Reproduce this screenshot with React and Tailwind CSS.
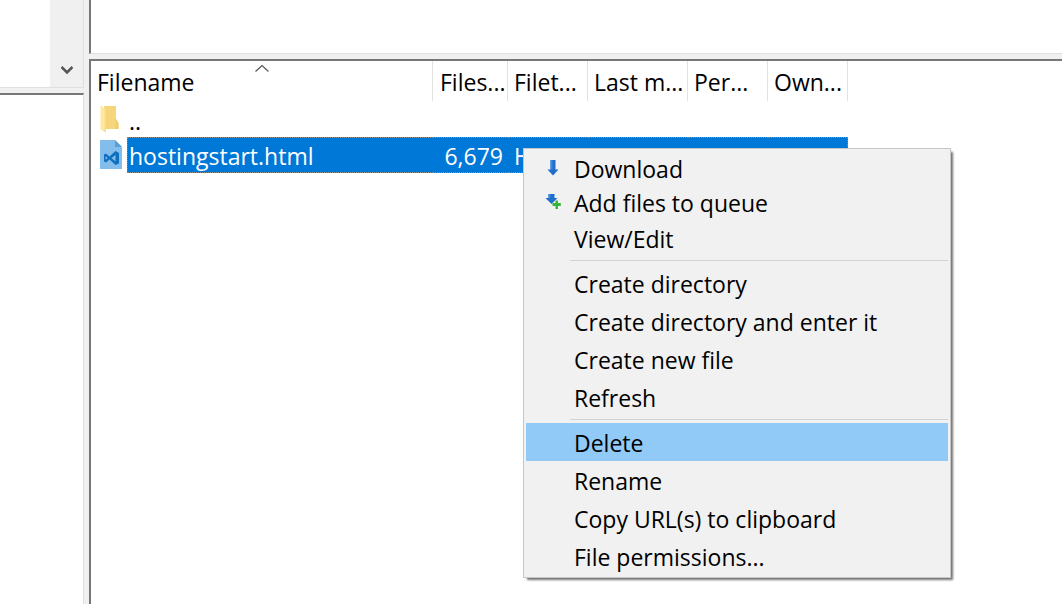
import React from 'react';

function FolderIcon() {
  return (
    <svg width="20" height="28" viewBox="0 0 20 28" aria-hidden="true">
      <path d="M4 1H16V14L18.500 18V24H4Z" fill="#f5d67c" />
      <path d="M16 14L18.500 18V24H15Z" fill="#f0cd70" />
      <path d="M0.500 1H2L6 5V27.500L0.500 24.500Z" fill="#ffe7a0" />
      <path d="M4.500 3.500L6 5V27.500L4.500 26.500Z" fill="#fbdc8a" />
    </svg>
  );
}

function HtmlFileIcon() {
  return (
    <svg width="22" height="30" viewBox="0 0 22 30" aria-hidden="true">
      <path d="M0 0H15L22 7V29H0Z" fill="#83bdec" />
      <path d="M15 0L22 7H15Z" fill="#5a9fd8" />
      <path d="M15.500 11L19 13V23.500L15.500 25L9.500 19.500L6 22.500L4 21.500V14.500L6 13.500L9.500 16.500ZM15.500 15L11.500 18L15.500 21.500ZM5.600 16.200V19.800L7.600 18Z" fill="#0f70bf" fillRule="evenodd" />
    </svg>
  );
}

function DownloadIcon() {
  return (
    <svg width="16" height="20" viewBox="0 0 16 20" aria-hidden="true">
      <path d="M5.500 2H10.500V11.500H13.500L8 17.500L2.500 11.500H5.500Z" fill="#1f6fca" />
      <path d="M5.500 2H7.500V11.500H5.500Z" fill="#3d8ade" />
    </svg>
  );
}

function QueueIcon() {
  return (
    <svg width="16" height="20" viewBox="0 0 16 20" aria-hidden="true">
      <path d="M3.500 2H9.500V6H12.500L6.500 12L0.500 6H3.500Z" fill="#1f6fca" />
      <path d="M3.500 2H5.500V6H3.500Z" fill="#3d8ade" />
      <path d="M10.500 8.500H13V11H15.800V14H13V17H10.500V14H7.500V11H10.500Z" fill="#35b637" />
    </svg>
  );
}

const columns = [
  { label: 'Filename', width: 'w-[342px]', pad: 'pl-[6px]', sorted: true },
  { label: 'Files...', width: 'w-[75px]', pad: 'pl-[7px]' },
  { label: 'Filet...', width: 'w-[80px]', pad: 'pl-[6px]' },
  { label: 'Last m...', width: 'w-[100px]', pad: 'pl-[6px]' },
  { label: 'Per...', width: 'w-[80px]', pad: 'pl-[6px]' },
  { label: 'Own...', width: 'w-[80px]', pad: 'pl-[6px]' },
];

const groups = [
  [
    { label: 'Download', icon: <DownloadIcon />, height: 'h-[34px]' },
    { label: 'Add files to queue', icon: <QueueIcon />, height: 'h-[34px]' },
    { label: 'View/Edit' },
  ],
  [
    { label: 'Create directory' },
    { label: 'Create directory and enter it' },
    { label: 'Create new file' },
    { label: 'Refresh' },
  ],
  [
    { label: 'Delete', active: true },
    { label: 'Rename' },
    { label: 'Copy URL(s) to clipboard' },
    { label: 'File permissions...' },
  ],
];

const selected = 'border-y border-dotted border-[#8f8a80] bg-[#0078d7] p-0 text-white';

function FileTable() {
  return (
    <table className="w-[757px] table-fixed border-separate border-spacing-0 text-left">
      <thead>
        <tr className="h-10">
          {columns.map((c) => (
            <th
              key={c.label}
              scope="col"
              aria-sort={c.sorted ? 'ascending' : undefined}
              className={`relative border-r border-[#e2e2e2] p-0 pt-[2px] font-normal whitespace-nowrap ${c.width} ${c.pad}`}
            >
              {c.label}
              {c.sorted && (
                <svg className="absolute top-[3px] left-1/2 -ml-2" width="16" height="9" viewBox="0 0 16 9" aria-hidden="true">
                  <path d="M1.500 7.500L8 1.500L14.500 7.500" fill="none" stroke="#555" strokeWidth="1.200" />
                </svg>
              )}
            </th>
          ))}
        </tr>
      </thead>
      <tbody>
        <tr className="h-9">
          <td className="p-0" colSpan={6}>
            <div className="flex h-9 items-center pl-[9px]">
              <FolderIcon />
              <span className="pt-1 pl-[9px]">..</span>
            </div>
          </td>
        </tr>
        <tr className="h-9">
          <td className="p-0">
            <div className="flex h-9 pl-[9px]">
              <span className="mr-[5px] flex items-center"><HtmlFileIcon /></span>
              <span className="flex flex-1 items-center border-y border-l border-dotted border-[#8f8a80] bg-[#0078d7] pt-[2px] pl-px text-white">
                hostingstart.html
              </span>
            </div>
          </td>
          <td className={`${selected} pt-[2px] pr-[5px] text-right`}>6,679</td>
          <td className={`${selected} pt-[2px] pl-[6px] whitespace-nowrap`}>
            <span className="block overflow-hidden">HTML</span>
          </td>
          <td className={selected} />
          <td className={selected} />
          <td className={`${selected} border-r`} />
        </tr>
      </tbody>
    </table>
  );
}

function ContextMenu() {
  return (
    <div
      role="menu"
      className="absolute top-[148px] left-[523px] w-[428px] border border-[#c6c6c6] bg-[#f1f1f1] p-[2px] shadow-[3px_3px_2px_-1px_rgba(0,0,0,0.55)]"
    >
      {groups.map((group, i) => (
        <div key={i} role="group">
          {i > 0 && <div className="mt-[3px] mb-[3px] ml-11 h-px bg-[#d2d2d2]" />}
          {group.map((item) => (
            <button
              key={item.label}
              role="menuitem"
              type="button"
              className={`flex w-full items-center text-left ${item.height || 'h-[38px]'} ${item.active ? 'bg-[#91c9f7]' : ''}`}
            >
              <span className="flex w-12 shrink-0 justify-center pl-[6px]">{item.icon}</span>
              <span className="pt-px">{item.label}</span>
            </button>
          ))}
        </div>
      ))}
    </div>
  );
}

export default function App() {
  return (
    <main className="relative flex h-screen gap-[5px] overflow-hidden bg-[#f0f0f0] font-['Open_Sans','Noto_Sans',sans-serif] text-[23px] leading-8 text-black">
      <section className="flex w-[84px] shrink-0 flex-col gap-[5px]">
        <div className="flex h-[88px] border-r border-b border-[#e0e0e0] bg-white">
          <div className="flex-1" />
          <button type="button" aria-label="Scroll down" className="flex w-[33px] items-end justify-center bg-[#f0f0f0] pb-[11px]">
            <svg width="12" height="11" viewBox="0 0 12 11" aria-hidden="true">
              <path d="M0.500 2L6 7.500L11.500 2" fill="none" stroke="#555" strokeWidth="2.600" />
            </svg>
          </button>
        </div>
        <div className="flex-1 border-t-2 border-r border-t-[#777] border-r-[#e0e0e0] bg-white" />
      </section>
      <section className="flex min-w-0 flex-1 flex-col gap-[5px]">
        <div className="h-[54px] border-b border-l-2 border-b-[#e0e0e0] border-l-[#777] bg-white" />
        <div className="flex-1 border-t-2 border-l-2 border-[#777] bg-white">
          <FileTable />
        </div>
      </section>
      <ContextMenu />
    </main>
  );
}
